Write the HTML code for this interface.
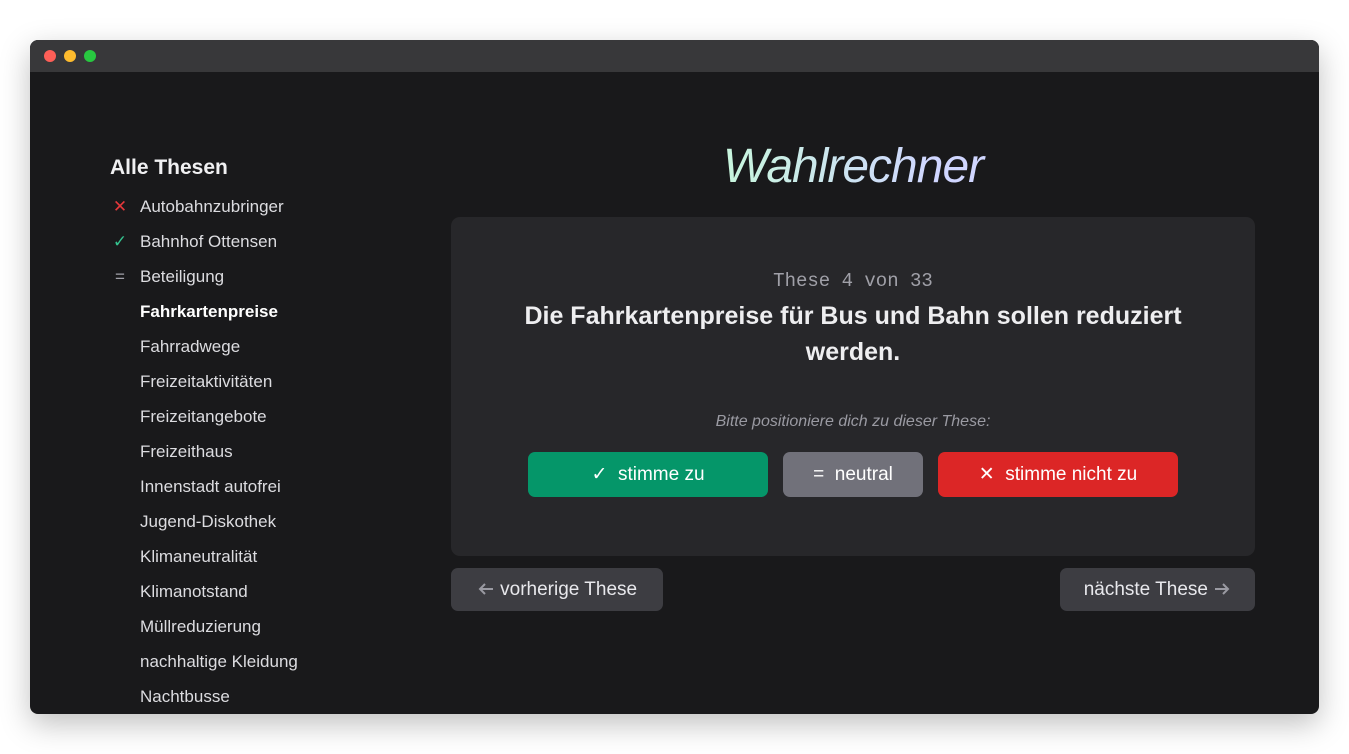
<!DOCTYPE html>
<html><head><meta charset="utf-8"><style>
*{box-sizing:border-box;margin:0;padding:0}
body{width:1349px;height:754px;background:#fff;font-family:"Liberation Sans",sans-serif;position:relative;overflow:hidden}
.win{position:absolute;left:30px;top:40px;width:1289px;height:674px;background:#19191b;border-radius:8px;overflow:hidden;box-shadow:0 10px 30px rgba(0,0,0,.25)}
.bar{height:32px;background:#38383a;position:relative}
.dot{position:absolute;top:10px;width:12px;height:12px;border-radius:50%}
.side{position:absolute;left:80px;top:116px;color:#dcdce0}
.side h2{font-size:21px;font-weight:bold;color:#f0f0f2;margin-bottom:9px}
.item{height:35px;line-height:35px;font-size:17px;position:relative;padding-left:30px}
.ic{position:absolute;left:0;top:0;width:20px;text-align:center}
.title{position:absolute;left:421px;width:804px;top:99px;text-align:center;font-size:48px;font-style:italic;letter-spacing:-1px;background:linear-gradient(90deg,#c8f5de 35%,#d0d6ff 60%);-webkit-background-clip:text;color:transparent}
.card{position:absolute;left:421px;top:177px;width:804px;height:339px;background:#27272a;border-radius:9px;text-align:center}
.n{margin-top:53px;font-family:"Liberation Mono",monospace;color:#a0a0a8;font-size:19px}
.q{font-size:25px;font-weight:bold;color:#eeeef0;line-height:36px;margin:6px auto 0;width:720px}
.p{margin-top:43px;font-style:italic;color:#9a9aa2;font-size:16px}
.b{position:absolute;top:235px;height:45px;border-radius:7px;color:#fff;font-size:19px;line-height:45px;text-align:center}
.nav{position:absolute;top:528px;height:43px;border-radius:7px;background:#3d3d42;color:#e8e8ec;font-size:19px;line-height:43px;text-align:center}
.nav svg{vertical-align:-2px}
</style></head><body>
<div class="win">
<div class="bar"><div class="dot" style="left:14px;background:#fe5f57"></div><div class="dot" style="left:34px;background:#febc2e"></div><div class="dot" style="left:54px;background:#28c840"></div></div>
<div class="side">
<h2>Alle Thesen</h2>
<div class="item"><span class="ic" style="color:#e5383b">✕</span>Autobahnzubringer</div>
<div class="item"><span class="ic" style="color:#34c38f">✓</span>Bahnhof Ottensen</div>
<div class="item"><span class="ic" style="color:#a0a0a8">=</span>Beteiligung</div>
<div class="item" style="font-weight:bold;color:#fff">Fahrkartenpreise</div>
<div class="item">Fahrradwege</div>
<div class="item">Freizeitaktivitäten</div>
<div class="item">Freizeitangebote</div>
<div class="item">Freizeithaus</div>
<div class="item">Innenstadt autofrei</div>
<div class="item">Jugend-Diskothek</div>
<div class="item">Klimaneutralität</div>
<div class="item">Klimanotstand</div>
<div class="item">Müllreduzierung</div>
<div class="item">nachhaltige Kleidung</div>
<div class="item">Nachtbusse</div>
</div>
<div class="title">Wahlrechner</div>
<div class="card">
<div class="n">These 4 von 33</div>
<div class="q">Die Fahrkartenpreise für Bus und Bahn sollen reduziert werden.</div>
<div class="p">Bitte positioniere dich zu dieser These:</div>
<div class="b" style="left:77px;width:240px;background:#059669">✓&nbsp; stimme zu</div>
<div class="b" style="left:332px;width:140px;background:#71717a">=&nbsp; neutral</div>
<div class="b" style="left:487px;width:240px;background:#dc2626">✕&nbsp; stimme nicht zu</div>
</div>
<div class="nav" style="left:421px;width:212px"><svg width="18" height="16" viewBox="0 0 18 16"><path d="M16 8H3M8 3L3 8l5 5" stroke="#9a9aa2" stroke-width="2" fill="none"/></svg> vorherige These</div>
<div class="nav" style="left:1030px;width:195px">nächste These <svg width="18" height="16" viewBox="0 0 18 16"><path d="M2 8h13M10 3l5 5-5 5" stroke="#9a9aa2" stroke-width="2" fill="none"/></svg></div>
</div>
</body></html>
